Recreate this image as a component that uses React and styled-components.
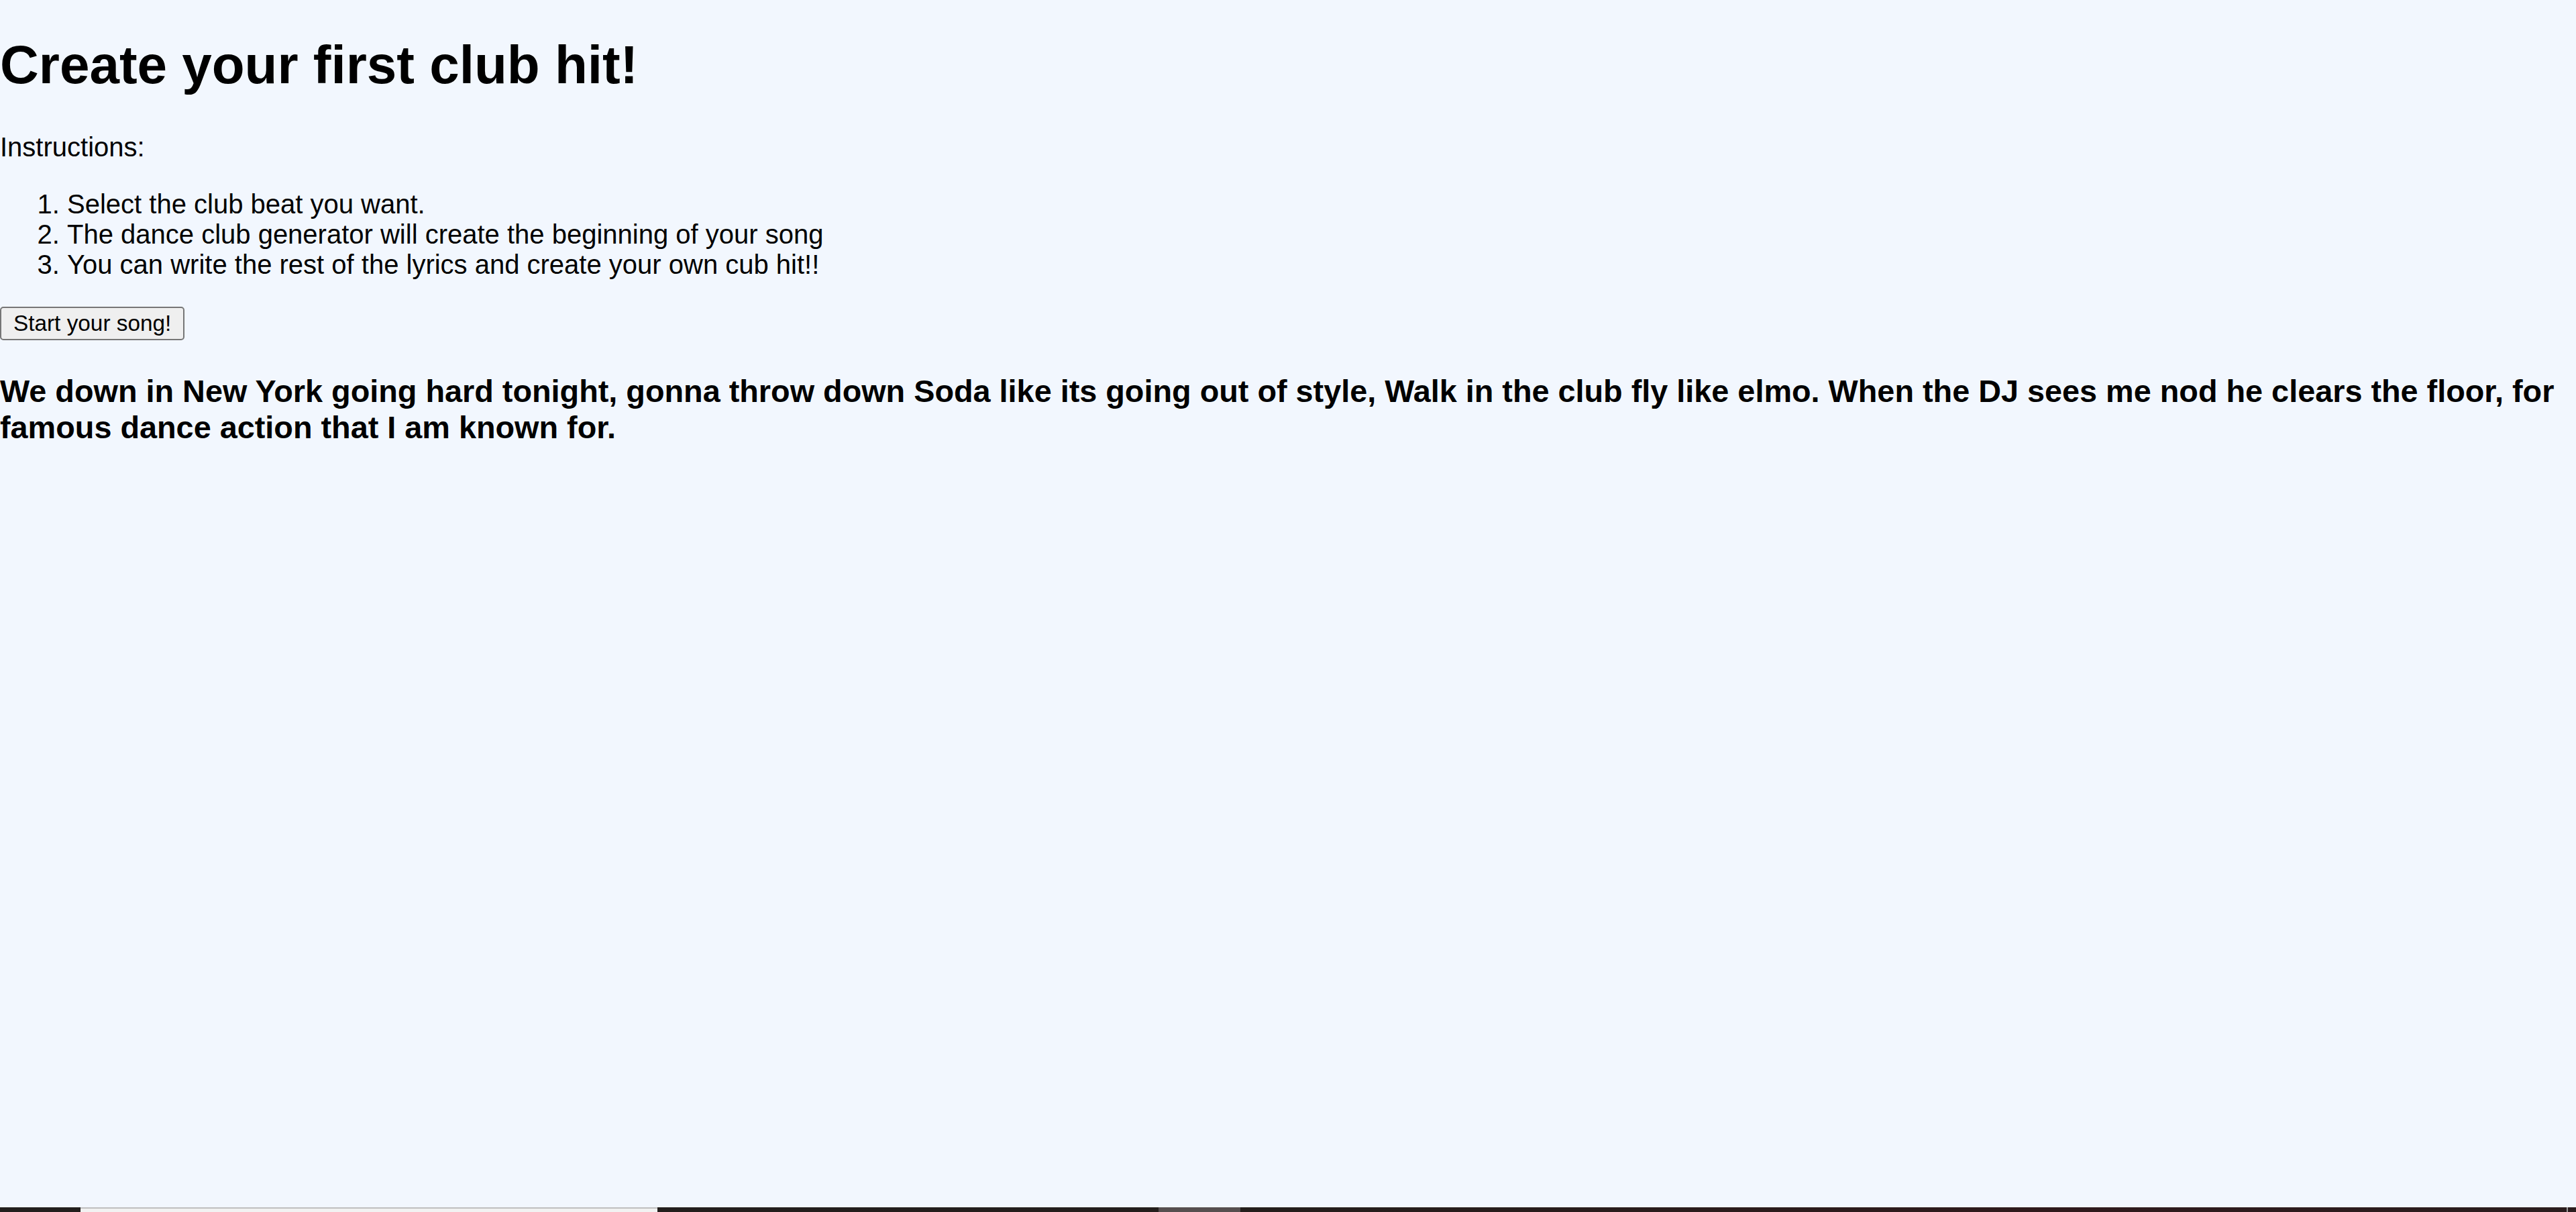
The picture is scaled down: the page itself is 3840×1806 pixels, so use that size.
import React from 'react';
import styled, { createGlobalStyle } from 'styled-components';

// page was captured at 2.5x, so every default size is scaled by 2.5
const GlobalStyle = createGlobalStyle`
  html, body {
    margin: 0;
    padding: 0;
    background: #f2f7fe;
  }
  body {
    font-family: "Liberation Sans", Arial, sans-serif;
    font-size: 40px;
    color: #000;
  }
`;

const Page = styled.div`
  min-height: 100vh;
  display: flex;
  flex-direction: column;
`;

const Main = styled.main`
  display: block;
`;

const Title = styled.h1`
  font-size: 80px;
  font-weight: bold;
  margin: 51px 0 53.6px;
`;

const Text = styled.p`
  margin: 40px 0;
`;

const Steps = styled.ol`
  margin: 40px 0;
  padding-left: 100px;
`;

const ButtonRow = styled.div`
  display: block;
`;

const StartButton = styled.button`
  font-family: "Liberation Sans", Arial, sans-serif;
  font-size: 33.33px;
  color: #000;
  background: #efefef;
  border: 2.5px solid #767676;
  border-radius: 5px;
  padding: 4px 18px;
  margin: 0;
  cursor: pointer;
  &:hover {
    background: #e5e5e5;
  }
`;

const Lyrics = styled.h3`
  font-size: 46.8px;
  font-weight: bold;
  margin: 49.5px 0 46.8px;
`;

const Taskbar = styled.div`
  margin-top: auto;
  flex-shrink: 0;
  height: 7px;
  display: flex;
  background: linear-gradient(90deg, #221f1d 0%, #241e1c 50%, #2f1a1c 80%, #2a1d1e 100%);
`;

const Slot = styled.div`
  flex: ${(p) => (p.$grow ? '1 1 auto' : `0 0 ${p.$w}px`)};
  box-sizing: border-box;
  ${(p) => p.$kind === 'active' && `
    background: #f2f2f2;
    border-top: 2px solid #bfbfbf;
  `}
  ${(p) => p.$kind === 'hover' && `
    background: #564f4f;
  `}
  ${(p) => p.$kind === 'edge' && `
    background: #9a9a9a;
  `}
`;

export default function App() {
  return (
    <Page>
      <GlobalStyle />
      <Main>
        <Title>Create your first club hit!</Title>
        <Text>Instructions:</Text>
        <Steps>
          <li>Select the club beat you want.</li>
          <li>The dance club generator will create the beginning of your song</li>
          <li>You can write the rest of the lyrics and create your own cub hit!!</li>
        </Steps>
        <ButtonRow>
          <StartButton>Start your song!</StartButton>
        </ButtonRow>
        <Lyrics>
          We down in New York going hard tonight, gonna throw down Soda like its going out of style, Walk in the club fly like elmo. When the DJ sees me nod he clears the floor, for famous dance action that I am known for.
        </Lyrics>
      </Main>
      <Taskbar>
        <Slot $w={120} />
        <Slot $w={860} $kind="active" />
        <Slot $w={747} />
        <Slot $w={122} $kind="hover" />
        <Slot $grow />
        <Slot $w={2} $kind="edge" />
        <Slot $w={12} />
      </Taskbar>
    </Page>
  );
}
